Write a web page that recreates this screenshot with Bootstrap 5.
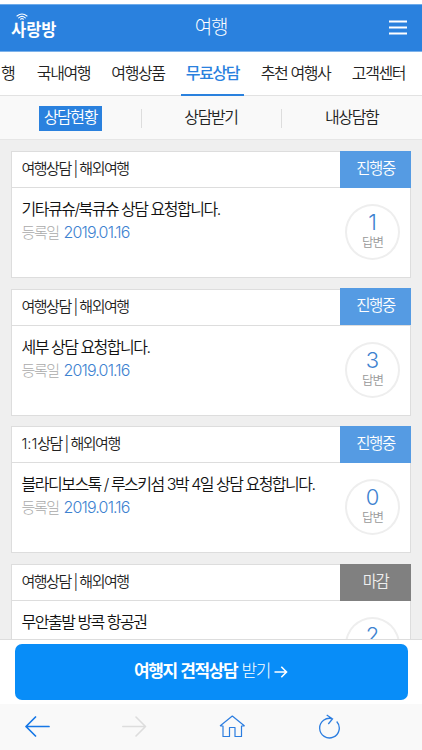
<!DOCTYPE html>
<html lang="ko">
<head>
<meta charset="utf-8">
<meta name="viewport" content="width=device-width, initial-scale=1">
<title>여행</title>
<link rel="stylesheet" href="https://cdn.jsdelivr.net/npm/bootstrap@5.3.0/dist/css/bootstrap.min.css">
<style>
body{font-family:"Inter","Noto Sans CJK KR",sans-serif;font-weight:350;font-size:16px;letter-spacing:-1.4px;color:#222;background:#fff;line-height:1.2}
.screen{height:750px;padding-top:4px}
.topbar{height:48px;background:#2a81de;border-top:1px solid #6eabea;border-bottom:1px solid #7db2ea;display:grid;grid-template-columns:1fr auto 1fr;padding:0 15px 0 11px}
.logo-text{font-family:"Noto Sans CJK KR",sans-serif;font-weight:700;font-size:16.5px;letter-spacing:0;line-height:20px;padding-top:14px}
.logo-wave{left:5px;top:8px}
.page-title{font-weight:300;font-size:19px;letter-spacing:-1.2px;padding-left:4px}
.tabs{height:44px;display:grid;grid-template-columns:26.25px 74.5px 74.5px 74.5px 91.5px 74.5px;border-bottom:1px solid #e2e2e2}
.tab-link{height:44px;color:#222;text-decoration:none;width:63px;border-bottom:2px solid transparent;white-space:nowrap;padding-top:2px}
.tab-link.wide{width:80px}
.tab-link.partial{width:100%;padding-left:1px}
.tab-link.current{color:#2a81de;border-color:#2a81de;font-weight:500}
.subtabs{height:44px;background:#f9f9f9;border-bottom:1px solid #e6e6e6;display:grid;grid-template-columns:1fr 1fr 1fr;padding-top:1px}
.subtabs>div+div::before{content:"";position:absolute;left:0;top:12px;height:19px;border-left:1px solid #ddd}
.chip{width:63px;height:25px;background:#2a81de;color:#fff}
.feed{height:500px;background:#efefef;padding:11px 11px 0}
.req{height:127px;margin-bottom:10.7px;background:#fff;border:1px solid #ddd}
.req-head{height:36px;border-bottom:1px solid #ddd;padding:0 0 1px 9.5px;font-size:15px}
.kind{letter-spacing:-1.5px}
.ratio{letter-spacing:-.1px}
.status{width:71px;height:37px;margin:0 -1px 0 0;background:#559be3;color:#fff;font-size:15.5px}
.status.closed{background:#808080;color:#eee}
.req-body{padding:9px 9.5px 0}
.req-title{line-height:24px;white-space:nowrap;color:#111;letter-spacing:-1.5px}
.req-date{line-height:23px;color:#aaa;font-size:15px;font-weight:300}
.req-date b{font-weight:300;font-size:16px;color:#3d82d0;letter-spacing:-.85px;margin-left:2px}
.count{width:55px;height:56px;border:2px solid #eee;top:16px;right:10px;padding-top:5px;color:#999;font-size:12.5px;line-height:15px;letter-spacing:-1px}
.count b{font-weight:300;font-size:22px;line-height:22px;color:#3d82d0;letter-spacing:0;margin-bottom:2px}
.cta-bar{height:65px;margin-top:-1px;background:#fff;border-top:1px solid #ddd;padding:4px 14.5px}
.cta{height:56px;background:#088df8;color:#fff;border-radius:7px;font-size:17px;letter-spacing:-1.4px;word-spacing:1px}
.cta:hover{background:#077fe0;color:#fff}
.toolbar{height:46px;background:#f9f9f9;display:grid;grid-template-columns:24.5px 24px 73.5px 25px 72px 27px 73px 21px}
.toolbar svg{grid-row:1;align-self:center}
.tool-back{grid-column:2}.tool-forward{grid-column:4}.tool-home{grid-column:6}.tool-reload{grid-column:8}
</style>
<script src="https://cdn.jsdelivr.net/npm/bootstrap@5.3.0/dist/js/bootstrap.bundle.min.js"></script>
</head>
<body class="overflow-hidden">
<div class="screen d-flex flex-column overflow-hidden">
<header class="topbar text-white flex-shrink-0 align-items-center">
<div class="position-relative align-self-start"><div class="logo-text">사랑방</div>
<svg class="logo-wave position-absolute" width="12" height="7" viewBox="0 0 12 7" fill="none" stroke="#fff" stroke-width="1.1" stroke-linecap="round"><path d="M1 3Q6-1 11 3M2.7 4.8Q6 2 9.3 4.8M4.6 6.2Q6 5 7.4 6.2"/></svg></div>
<div class="page-title">여행</div>
<svg class="ms-auto" width="18" height="16" viewBox="0 0 18 16" stroke="#fff" stroke-width="1.8"><path d="M0 1.500H18M0 7.500H18M0 13.500H18"/></svg>
</header>
<nav class="tabs flex-shrink-0">
<div class="overflow-hidden"><a class="tab-link partial d-flex align-items-center" href="#">행</a></div>
<div class="d-flex justify-content-center"><a class="tab-link d-flex align-items-center justify-content-center" href="#">국내여행</a></div>
<div class="d-flex justify-content-center"><a class="tab-link d-flex align-items-center justify-content-center" href="#">여행상품</a></div>
<div class="d-flex justify-content-center"><a class="tab-link current d-flex align-items-center justify-content-center" href="#">무료상담</a></div>
<div class="d-flex justify-content-center"><a class="tab-link wide d-flex align-items-center justify-content-center" href="#">추천 여행사</a></div>
<div class="d-flex justify-content-center"><a class="tab-link d-flex align-items-center justify-content-center" href="#">고객센터</a></div>
</nav>
<nav class="subtabs flex-shrink-0">
<div class="d-flex align-items-center justify-content-center position-relative"><span class="chip d-flex align-items-center justify-content-center">상담현황</span></div>
<div class="d-flex align-items-center justify-content-center position-relative">상담받기</div>
<div class="d-flex align-items-center justify-content-center position-relative">내상담함</div>
</nav>
<main class="feed overflow-hidden flex-shrink-0">
<article class="req"><div class="req-head d-flex align-items-center justify-content-between"><span class="kind">여행상담 | 해외여행</span><span class="status d-flex align-items-center justify-content-center">진행중</span></div>
<div class="req-body position-relative"><div class="req-title">기타큐슈/북큐슈 상담 요청합니다.</div><div class="req-date">등록일 <b>2019.01.16</b></div><div class="count rounded-circle position-absolute d-flex flex-column align-items-center"><b>1</b>답변</div></div></article>
<article class="req"><div class="req-head d-flex align-items-center justify-content-between"><span class="kind">여행상담 | 해외여행</span><span class="status d-flex align-items-center justify-content-center">진행중</span></div>
<div class="req-body position-relative"><div class="req-title">세부 상담 요청합니다.</div><div class="req-date">등록일 <b>2019.01.16</b></div><div class="count rounded-circle position-absolute d-flex flex-column align-items-center"><b>3</b>답변</div></div></article>
<article class="req"><div class="req-head d-flex align-items-center justify-content-between"><span class="kind"><span class="ratio">1:1</span>상담 | 해외여행</span><span class="status d-flex align-items-center justify-content-center">진행중</span></div>
<div class="req-body position-relative"><div class="req-title">블라디보스톡 / 루스키섬 3박 4일 상담 요청합니다.</div><div class="req-date">등록일 <b>2019.01.16</b></div><div class="count rounded-circle position-absolute d-flex flex-column align-items-center"><b>0</b>답변</div></div></article>
<article class="req"><div class="req-head d-flex align-items-center justify-content-between"><span class="kind">여행상담 | 해외여행</span><span class="status closed d-flex align-items-center justify-content-center">마감</span></div>
<div class="req-body position-relative"><div class="req-title">무안출발 방콕 항공권</div><div class="count rounded-circle position-absolute d-flex flex-column align-items-center"><b>2</b></div></div></article>
</main>
<div class="cta-bar flex-shrink-0 position-relative"><button class="cta btn border-0 w-100 p-0 d-flex align-items-center justify-content-center"><strong>여행지 견적상담</strong>&nbsp;<span class="fw-light">받기</span>
<svg class="ms-1" width="14" height="12" viewBox="0 0 13 12" fill="none" stroke="#fff" stroke-width="1.6"><path d="M0 6H12M6.8.8 12 6 6.8 11.2"/></svg></button></div>
<footer class="toolbar flex-shrink-0">
<svg class="tool-back" width="25" height="22" viewBox="0 0 25 22" fill="none" stroke="#1677e6" stroke-width="1.7" stroke-linecap="round" stroke-linejoin="round"><path d="M24 10.500H1M10.5 1 1 10.500 10.5 20"/></svg>
<svg class="tool-forward" width="25" height="22" viewBox="0 0 25 22" fill="none" stroke="#ddd" stroke-width="1.6" stroke-linecap="round" stroke-linejoin="round"><path d="M.8 10.500H23.5M14 1 23.5 10.500 14 20"/></svg>
<svg class="tool-home" width="27" height="24" viewBox="0 0 27 24" fill="none" stroke="#2b7de0" stroke-width="1.2" stroke-linejoin="round"><path d="M1 11 13.3 1 25.6 11M1 11H4V21.500H10.5V12.500H16V21.500H22.500V11H25.6"/></svg>
<svg class="tool-reload" width="22" height="27" viewBox="0 0 22 27" fill="none" stroke="#2b7de0" stroke-width="1.3"><path d="M13.5 4.800A9.800 9.800 0 1 0 17.700 7.500M7.700 1 13.500 4.800 9.300 10"/></svg>
</footer>
</div>
</body>
</html>
